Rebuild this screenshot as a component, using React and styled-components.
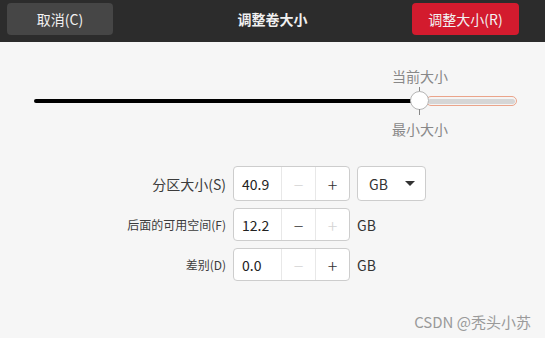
import * as React from 'react';
import styled, { createGlobalStyle } from 'styled-components'

const Global = createGlobalStyle`
  html, body { margin: 0; padding: 0; background: #f6f6f6; }
  body { font-family: "Noto Sans CJK SC", "Noto Sans", sans-serif; }
`

const Window = styled.div`
  width: 545px;
  height: 338px;
  background: #f6f6f6;
  position: relative;
  overflow: hidden;
`

const Header = styled.div`
  height: 42px;
  background: #2c2c2c;
  display: flex;
  align-items: flex-start;
  justify-content: space-between;
  padding: 3px 26px 0 7px;
  box-sizing: border-box;
  position: relative;
`

const HeaderButton = styled.div`
  width: ${p => p.$w}px;
  height: 32px;
  border-radius: 4px;
  background: ${p => p.$primary ? '#d31b2e' : '#464646'};
  color: #f2f2f2;
  font-size: 14px;
  display: flex;
  align-items: center;
  justify-content: center;
`

const Title = styled.div`
  position: absolute;
  left: 0;
  right: 0;
  top: 0;
  height: 38px;
  display: flex;
  align-items: center;
  justify-content: center;
  color: #f0f0f0;
  font-size: 14px;
  font-weight: bold;
  pointer-events: none;
`

const SliderArea = styled.div`
  padding: 28px 28px 0 34px;
  height: 100px;
  box-sizing: border-box;
`

const SliderTrack = styled.div`
  position: relative;
  height: 64px;
`

const Filled = styled.div`
  position: absolute;
  left: 0;
  top: 29px;
  width: 386px;
  height: 4px;
  border-radius: 2px;
  background: #000;
`

const Rest = styled.div`
  position: absolute;
  left: 392px;
  top: 26px;
  width: 91px;
  height: 10px;
  box-sizing: border-box;
  border: 1.5px solid #eba48a;
  border-radius: 5px;
  background: #f4f4f4;
  &::after {
    content: '';
    position: absolute;
    left: 1px; right: 1px; top: 1.5px; bottom: 1.5px;
    border-radius: 3px;
    background: #d6d6d6;
  }
`

const Knob = styled.div`
  position: absolute;
  left: 376px;
  top: 21px;
  width: 19px;
  height: 19px;
  border-radius: 50%;
  background: #fff;
  border: 1px solid #b5b5b5;
  box-sizing: border-box;
`

const Tick = styled.div`
  position: absolute;
  left: 385px;
  top: ${p => p.$top}px;
  width: 1px;
  height: 6px;
  background: #888;
`

const Mark = styled.div`
  position: absolute;
  left: 351px;
  width: 70px;
  text-align: center;
  top: ${p => p.$top}px;
  color: #888;
  font-size: 14px;
  line-height: 18px;
`

const Form = styled.div`
  display: grid;
  grid-template-columns: 226px 117px auto;
  column-gap: 7px;
  row-gap: 7px;
  padding-top: 24px;
  align-items: center;
`

const Label = styled.div`
  text-align: right;
  color: #3c3c3c;
  font-size: ${p => p.$big ? 14 : 12}px;
`

const Spin = styled.div`
  display: flex;
  height: ${p => p.$h}px;
  border: 1px solid #cdcdcd;
  border-radius: 4px;
  background: #fff;
  box-sizing: border-box;
`

const SpinText = styled.div`
  width: 47px;
  display: flex;
  align-items: center;
  padding-left: 8px;
  box-sizing: border-box;
  font-size: 14px;
  color: #222;
`

const SpinBtn = styled.div`
  flex: 1;
  border-left: 1px solid #e8e8e8;
  display: flex;
  align-items: center;
  justify-content: center;
  color: ${p => p.$disabled ? '#d4d4d4' : '#333'};
  font-size: 18px;
  font-weight: 300;
`

const Unit = styled.div`
  font-size: 14px;
  color: #333;
`

const Dropdown = styled.div`
  width: 69px;
  height: 35px;
  border: 1px solid #cdcdcd;
  border-radius: 4px;
  background: #fff;
  box-sizing: border-box;
  display: flex;
  align-items: center;
  justify-content: space-between;
  padding: 0 10px 0 11px;
  font-size: 14px;
  color: #333;
`

const Caret = styled.div`
  width: 0;
  height: 0;
  border-left: 5px solid transparent;
  border-right: 5px solid transparent;
  border-top: 5px solid #333;
`

const Watermark = styled.div`
  position: absolute;
  right: 14px;
  bottom: 6px;
  font-size: 15px;
  color: #9a9a9a;
`

function Row({ label, big, value, h, minusOff, plusOff, children }) {
  return (
    <>
      <Label $big={big}>{label}</Label>
      <Spin $h={h}>
        <SpinText>{value}</SpinText>
        <SpinBtn $disabled={minusOff}>−</SpinBtn>
        <SpinBtn $disabled={plusOff}>+</SpinBtn>
      </Spin>
      {children}
    </>
  )
}

export default function App() {
  return (
    <Window>
      <Global />
      <Header>
        <HeaderButton $w={106}>取消(C)</HeaderButton>
        <Title>调整卷大小</Title>
        <HeaderButton $w={107} $primary>调整大小(R)</HeaderButton>
      </Header>
      <SliderArea>
        <SliderTrack>
          <Mark $top={-3}>当前大小</Mark>
          <Tick $top={17} />
          <Filled />
          <Rest />
          <Knob />
          <Tick $top={39} />
          <Mark $top={50}>最小大小</Mark>
        </SliderTrack>
      </SliderArea>
      <Form>
        <Row label="分区大小(S)" big value="40.9" h={35} minusOff>
          <Dropdown>GB<Caret /></Dropdown>
        </Row>
        <Row label="后面的可用空间(F)" value="12.2" h={33} plusOff>
          <Unit>GB</Unit>
        </Row>
        <Row label="差别(D)" value="0.0" h={33} minusOff>
          <Unit>GB</Unit>
        </Row>
      </Form>
      <Watermark>CSDN @秃头小苏</Watermark>
    </Window>
  )
}
